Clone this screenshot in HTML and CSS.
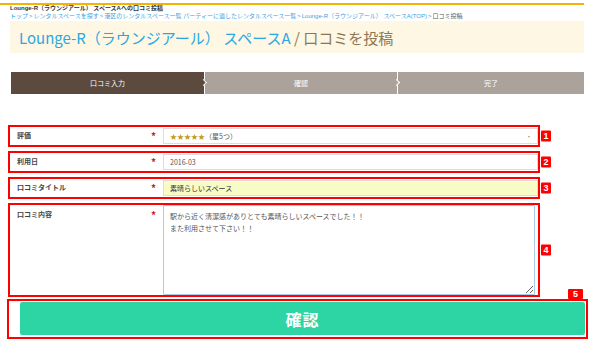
FILE: index.html
```html
<!DOCTYPE html>
<html lang="ja">
<head>
<meta charset="utf-8">
<title>口コミを投稿</title>
<link rel="stylesheet" href="styles.css">
</head>
<body>

<!-- page header -->
<header class="siteHead">
  <p class="pageName">Lounge-R（ラウンジアール） スペースAへの口コミ投稿</p>
  <nav class="crumbs">
    <a href="#">トップ</a><span class="sep">&gt;</span><a href="#">レンタルスペースを探す</a><span class="sep">&gt;</span><a href="#">港区のレンタルスペース一覧</a> <a href="#">パーティーに適したレンタルスペース一覧</a><span class="sep">&gt;</span><a href="#">Lounge-R（ラウンジアール） スペースA(TOP)</a><span class="sep">&gt;</span><span class="here">口コミ投稿</span>
  </nav>
</header>

<div class="titleBox">
  <h1><span class="spaceName">Lounge-R（ラウンジアール） スペースA</span><span class="pageTitle"> / 口コミを投稿</span></h1>
</div>

<!-- steps -->
<ol class="steps">
  <li class="step current">口コミ入力</li>
  <li class="step">確認</li>
  <li class="step last">完了</li>
</ol>

<!-- review form -->
<form class="review">
  <div class="field">
    <div class="fieldLabel"><span>評価</span><span class="req">*</span></div>
    <div class="control select"><span class="stars">★★★★★</span>（星5つ）</div>
    <span class="badge">1</span>
  </div>

  <div class="field">
    <div class="fieldLabel"><span>利用日</span><span class="req">*</span></div>
    <div class="control">2016-03</div>
    <span class="badge">2</span>
  </div>

  <div class="field">
    <div class="fieldLabel"><span>口コミタイトル</span><span class="req">*</span></div>
    <div class="control filled">素晴らしいスペース</div>
    <span class="badge">3</span>
  </div>

  <div class="field fieldBig">
    <div class="fieldLabel"><span>口コミ内容</span><span class="req">*</span></div>
    <textarea class="body">駅から近く清潔感がありとても素晴らしいスペースでした！！
また利用させて下さい！！</textarea>
    <span class="badge">4</span>
  </div>

  <div class="submitRow">
    <button type="button" class="confirmButton">確認</button>
    <span class="badge badgeTop">5</span>
  </div>
</form>

<script>
document.addEventListener('DOMContentLoaded', function() {
    // caret at the end of the review text
    const ta = document.querySelector('textarea');
    if (ta) {
        ta.focus();
        ta.selectionStart = ta.selectionEnd = ta.value.length;
    }
});
</script>

</body>
</html>
```

FILE: styles.css
```css
body {
  margin: 0;
  background-color: #ffffff;
  color: #444444;
  font-family: "Noto Sans CJK JP", "Noto Sans", sans-serif;
}

/* header */
.siteHead {
  margin-top: 3px;
  width: 584px;
  border-top: 2px solid #f5b301;
  font-family: "Liberation Sans", "Noto Sans CJK JP", sans-serif;
}

.pageName {
  margin: 0;
  padding-left: 10px;
  height: 7px;
  font-size: 6px;
  line-height: 7px;
  font-weight: bold;
  color: #333333;
  white-space: nowrap;
}

.crumbs {
  padding-left: 10px;
  height: 7px;
  margin-top: 1px;
  font-size: 6px;
  line-height: 7px;
  white-space: nowrap;
}

.crumbs a {
  color: #3aa2de;
  text-decoration: none;
}

.crumbs .sep {
  color: #7a8a98;
  margin: 0 1px;
}

.crumbs .here {
  color: #555555;
}

.titleBox {
  margin: 1px 0 0 10px;
  width: 574px;
  height: 32px;
  padding-left: 9px;
  box-sizing: border-box;
  background-color: #fdf7e3;
  display: flex;
  align-items: center;
}

.titleBox h1 {
  margin: 0;
  font-size: 15px;
  line-height: 1;
  font-weight: normal;
  white-space: nowrap;
}

.spaceName {
  color: #2ba7e3;
}

.pageTitle {
  color: #8b7757;
}

/* steps */
.steps {
  list-style: none;
  margin: 19px 0 0 11px;
  padding: 0;
  width: 573px;
  height: 22px;
  display: flex;
}

.step {
  width: 193px;
  flex-shrink: 0;
  box-sizing: border-box;
  position: relative;
  background-color: #aba29c;
  color: #ffffff;
  font-size: 7px;
  display: flex;
  align-items: center;
  justify-content: center;
}

.step.last {
  width: 187px;
}

.step.current {
  background-color: #5b4a3d;
}

.step + .step {
  border-left: 1px solid #ffffff;
}

/* little arrow on the divider */
.step + .step::before {
  content: "";
  position: absolute;
  left: -4px;
  top: 50%;
  width: 4px;
  height: 4px;
  margin-top: -3px;
  transform: rotate(45deg);
  border-top: 1px solid #ffffff;
  border-right: 1px solid #ffffff;
  background-color: #aba29c;
}

.step.current + .step::before {
  background-color: #5b4a3d;
}

/* form rows */
.review {
  margin: 31px 0 0 8px;
}

.field {
  position: relative;
  display: flex;
  width: 532px;
  box-sizing: border-box;
  border: 2px solid #ff0000;
  padding: 1px 0;
  background-color: #ffffff;
}

.field + .field {
  margin-top: 4px;
}

.fieldLabel {
  width: 153px;
  flex-shrink: 0;
  box-sizing: border-box;
  padding: 3px 7px 0 7px;
  display: flex;
  justify-content: space-between;
  font-size: 7px;
  line-height: 8px;
  font-weight: bold;
  color: #444444;
}

.req {
  color: #cc1f1f;
  font-size: 10px;
  line-height: 9px;
}

.control {
  position: relative;
  width: 375px;
  height: 16px;
  box-sizing: border-box;
  border: 1px solid #dddddd;
  padding: 0 6px;
  display: flex;
  align-items: center;
  font-size: 7px;
  color: #555555;
  background-color: #ffffff;
}

.control.filled {
  background-color: #f9fbc6;
  color: #333333;
}

.stars {
  color: #c49a1c;
}

.select::after {
  content: "";
  position: absolute;
  right: 7px;
  top: 7px;
  border-left: 1.5px solid transparent;
  border-right: 1.5px solid transparent;
  border-top: 2px solid #b89a62;
}

.fieldBig {
  padding: 0;
  margin-top: 3px;
}

.fieldBig .fieldLabel {
  padding-top: 5px;
}

.body {
  width: 372px;
  height: 90px;
  box-sizing: border-box;
  margin: 0;
  border: 1px solid #a9cbe8;
  border-radius: 1px;
  padding: 4px 6px;
  font-family: "Noto Sans CJK JP", "Noto Sans", sans-serif;
  font-size: 7px;
  line-height: 12px;
  color: #555555;
  resize: both;
  outline: none;
}

/* confirm button */
.submitRow {
  position: relative;
  margin: 2px 0 0 -1px;
  width: 581px;
  box-sizing: border-box;
  border: 2px solid #ff0000;
  padding: 1px 1px 2px 11px;
}

.confirmButton {
  display: block;
  width: 565px;
  height: 33px;
  border: none;
  border-radius: 2px;
  background-color: #2ed5a4;
  color: #ffffff;
  font-family: "Noto Sans CJK JP", "Noto Sans", sans-serif;
  font-size: 16px;
  font-weight: bold;
  letter-spacing: 1px;
}

/* numbered markers */
.badge {
  position: absolute;
  left: 100%;
  top: 50%;
  margin-left: 3px;
  transform: translateY(-50%);
  width: 10px;
  height: 11px;
  border-radius: 1px;
  background-color: #ff0000;
  color: #ffffff;
  font-family: "Liberation Sans", sans-serif;
  font-size: 9px;
  font-weight: bold;
  line-height: 11px;
  text-align: center;
}

.badgeTop {
  left: auto;
  top: auto;
  right: 3px;
  bottom: calc(100% + 2px);
  margin-left: 0;
  transform: none;
  width: 15px;
  height: 10px;
  line-height: 10px;
}
```
